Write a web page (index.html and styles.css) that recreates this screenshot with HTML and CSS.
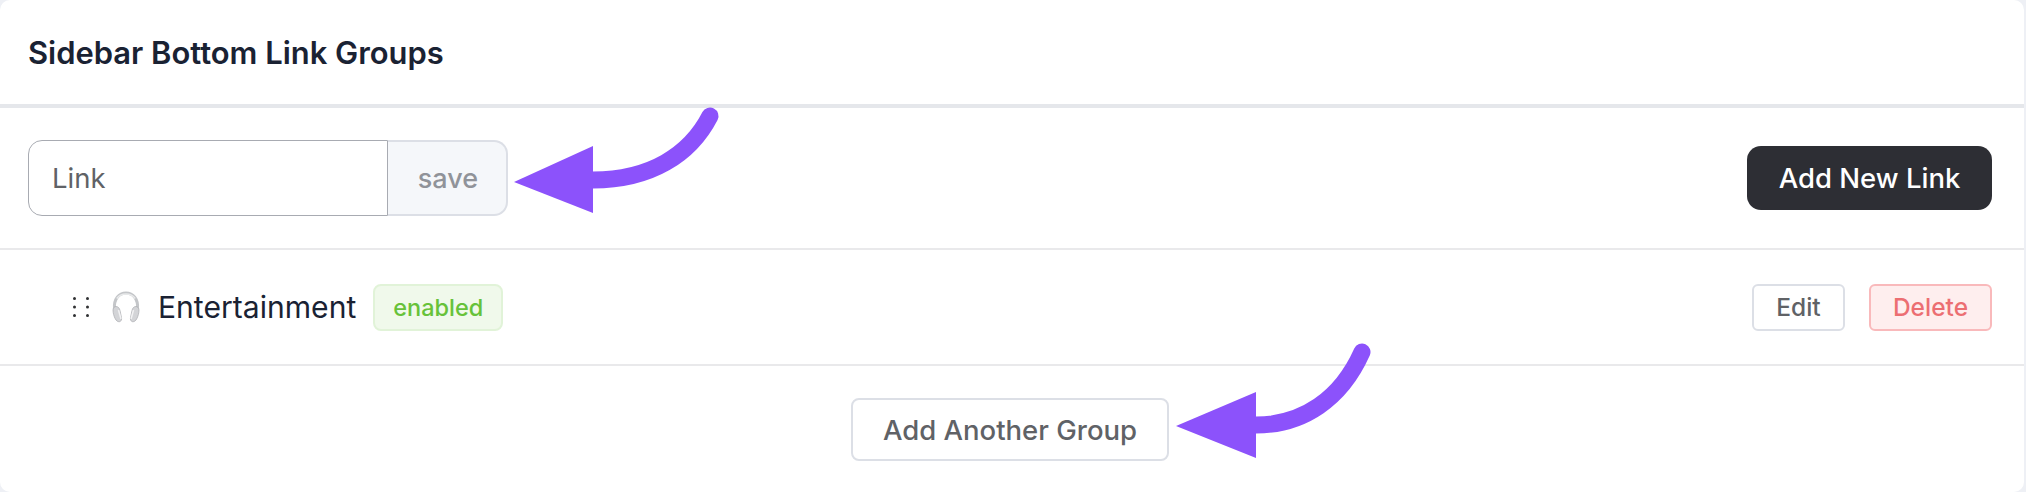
FILE: index.html
```html
<!DOCTYPE html>
<html lang="en">
<head>
    <meta charset="UTF-8">
    <meta name="viewport" content="width=device-width, initial-scale=1.0">
    <title>Sidebar Bottom Link Groups</title>
    <link rel="stylesheet" href="styles.css">
</head>
<body>
    <div class="card">
        <div class="card-header">
            <h3>Sidebar Bottom Link Groups</h3>
        </div>

        <!-- Group name + add link -->
        <div class="toolbar">
            <div class="input-group">
                <input class="group-name" type="text" value="Link">
                <button class="save-btn">save</button>
            </div>
            <button class="add-link-btn">Add New Link</button>
        </div>

        <!-- Link row -->
        <div class="link-row">
            <div class="link-info">
                <svg class="drag-handle" viewBox="0 0 16 20" width="16" height="20">
                    <circle cx="1.500" cy="1.500" r="1.500"/><circle cx="14.500" cy="1.500" r="1.500"/>
                    <circle cx="1.500" cy="10" r="1.500"/><circle cx="14.500" cy="10" r="1.500"/>
                    <circle cx="1.500" cy="18.500" r="1.500"/><circle cx="14.500" cy="18.500" r="1.500"/>
                </svg>
                <svg class="link-icon" viewBox="0 0 28 32" width="28" height="32">
                    <path d="M2.500 18C1.500 8 7 2 14 2S26.500 8 25.500 18" fill="none" stroke="#c4c6c9" stroke-width="3"/>
                    <path d="M4.800 7.500C7 4.300 10 3 14 3s7 1.300 9.200 4.500" fill="none" stroke="#e9eaeb" stroke-width="1.500"/>
                    <path d="M1 19c0-2 1.500-3.500 3-3.500 2 0 3.500 1.500 4 4l1.500 7c.4 2-.4 4-2 4.200-1.800.2-3.300-1-4.300-3C2 25.500 1 22 1 19z" fill="#d3d4d7" stroke="#a9abaf" stroke-width=".7"/>
                    <path d="M27 19c0-2-1.500-3.500-3-3.500-2 0-3.500 1.500-4 4l-1.500 7c-.4 2 .4 4 2 4.200 1.800.2 3.300-1 4.300-3C26 25.500 27 22 27 19z" fill="#d3d4d7" stroke="#a9abaf" stroke-width=".7"/>
                    <path d="M6.500 19l2.500 9" fill="none" stroke="#f2f2f3" stroke-width="1.500"/>
                    <path d="M21.500 19l-2.500 9" fill="none" stroke="#f2f2f3" stroke-width="1.500"/>
                </svg>
                <span class="link-name">Entertainment</span>
                <span class="tag-enabled">enabled</span>
            </div>
            <div class="link-actions">
                <button class="edit-btn">Edit</button>
                <button class="delete-btn">Delete</button>
            </div>
        </div>

        <div class="card-footer">
            <button class="add-group-btn">Add Another Group</button>
        </div>

        <!-- Annotation arrows -->
        <svg class="arrow arrow-save" viewBox="0 0 230 130" width="230" height="130">
            <path d="M93 80C150 80 190 55 210 16" fill="none" stroke="#8c52fb" stroke-width="17" stroke-linecap="round"/>
            <path d="M14 82L93 46V113z" fill="#8c52fb"/>
        </svg>
        <svg class="arrow arrow-group" viewBox="0 0 230 130" width="230" height="130">
            <path d="M93 90C140 90 178 64 199 17" fill="none" stroke="#8c52fb" stroke-width="17" stroke-linecap="round"/>
            <path d="M13 91L93 57V123z" fill="#8c52fb"/>
        </svg>
    </div>
</body>
</html>
```

FILE: styles.css
```css
body {
    font-family: Inter, "Liberation Sans", sans-serif;
    margin: 0;
    padding: 0;
    background-color: #eef0f5;
}

button {
    font-family: inherit;
    cursor: pointer;
}

.card {
    position: relative;
    box-sizing: border-box;
    width: 2024px;
    height: 492px;
    background-color: #fff;
    border-radius: 10px;
}

.card-header {
    box-sizing: border-box;
    height: 108px;
    padding: 0 28px;
    display: flex;
    align-items: center;
    border-bottom: 4px solid #e5e7eb;
}

.card-header h3 {
    margin: 0;
    font-size: 30.9px;
    font-weight: 600;
    color: #1a2233;
}

.toolbar {
    box-sizing: border-box;
    height: 142px;
    padding: 0 32px 0 28px;
    display: flex;
    align-items: center;
    justify-content: space-between;
    border-bottom: 2px solid #e9e9eb;
}

.input-group {
    display: flex;
    height: 76px;
}

.group-name {
    box-sizing: border-box;
    width: 360px;
    height: 76px;
    padding: 0 23px;
    font-family: inherit;
    font-size: 27.5px;
    color: #606266;
    background-color: #fff;
    border: 1px solid #a8abb2;
    border-radius: 14px 0 0 14px;
    outline: none;
}

.save-btn {
    box-sizing: border-box;
    width: 120px;
    height: 76px;
    padding-left: 8px;
    font-size: 27px;
    font-weight: 500;
    color: #909399;
    background-color: #f5f7fa;
    border: 2px solid #dcdfe6;
    border-left: 0;
    border-radius: 0 14px 14px 0;
}

.add-link-btn {
    box-sizing: border-box;
    width: 245px;
    height: 64px;
    font-size: 27.5px;
    font-weight: 500;
    color: #fff;
    background-color: #2d2e34;
    border: 0;
    border-radius: 14px;
}

.link-row {
    box-sizing: border-box;
    height: 116px;
    padding: 0 32px 0 73px;
    display: flex;
    align-items: center;
    justify-content: space-between;
    border-bottom: 2px solid #e9e9eb;
}

.link-info {
    display: flex;
    align-items: center;
}

.drag-handle {
    fill: #303133;
    margin-right: 23px;
}

.link-icon {
    margin-right: 18px;
}

.link-name {
    font-size: 30.1px;
    color: #1a2233;
    margin-right: 17px;
}

.tag-enabled {
    box-sizing: border-box;
    width: 130px;
    height: 47px;
    display: flex;
    align-items: center;
    justify-content: center;
    font-size: 23.5px;
    font-weight: 500;
    color: #67c23a;
    background-color: #f0f9eb;
    border: 2px solid #e1f3d8;
    border-radius: 8px;
}

.link-actions {
    display: flex;
    gap: 24px;
}

.edit-btn,
.delete-btn {
    box-sizing: border-box;
    height: 47px;
    font-size: 24.5px;
    font-weight: 500;
    border-radius: 6px;
}

.edit-btn {
    width: 93px;
    color: #606266;
    background-color: #fff;
    border: 2px solid #dcdfe6;
}

.delete-btn {
    width: 123px;
    color: #ec6e72;
    background-color: #feeeee;
    border: 2px solid #f9b9bb;
}

.card-footer {
    display: flex;
    justify-content: center;
    padding: 32px 4px 0 0;
}

.add-group-btn {
    box-sizing: border-box;
    width: 318px;
    height: 63px;
    font-size: 27.5px;
    font-weight: 500;
    color: #606266;
    background-color: #fff;
    border: 2px solid #dcdfe6;
    border-radius: 8px;
}

/* arrows sit on top of the card */
.arrow {
    position: absolute;
}

.arrow-save {
    left: 500px;
    top: 100px;
}

.arrow-group {
    left: 1163px;
    top: 335px;
}
```
